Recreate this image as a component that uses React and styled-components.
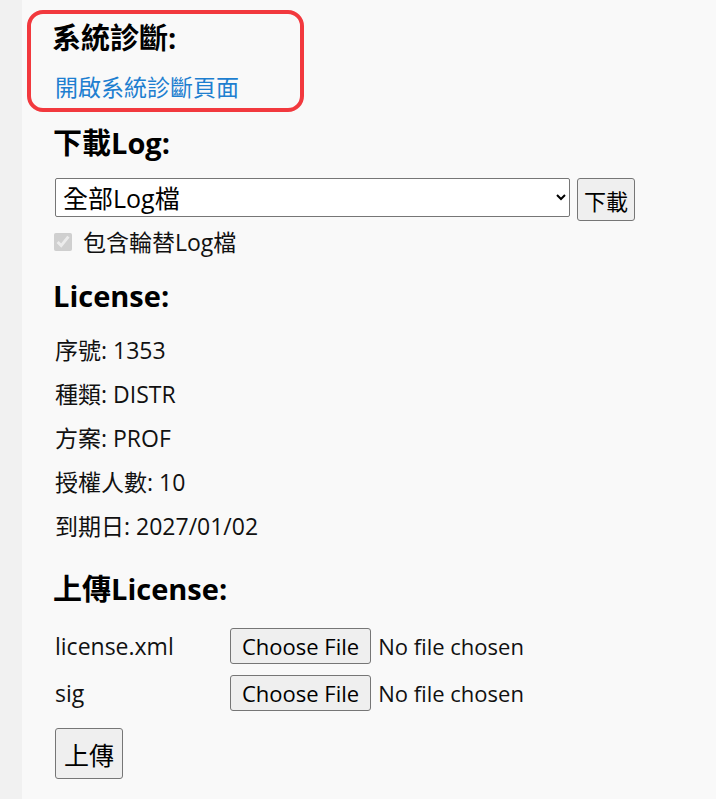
import styled, { createGlobalStyle } from 'styled-components';

const Global = createGlobalStyle`
	html, body {
		margin: 0;
		padding: 0;
		background: #f9f9f9;
	}
	body {
		font-family: "Open Sans", "Noto Sans CJK TC", sans-serif;
		color: #111;
	}
`;

const licenseInfo = [
	['序號', '1353'],
	['種類', 'DISTR'],
	['方案', 'PROF'],
	['授權人數', '10'],
	['到期日', '2027/01/02'],
];

function App() {
	return (
		<>
			<Global />
			<Page>
				<Side />
				<Main>
					<Highlight>
						<Heading>系統診斷:</Heading>
						<Link href="#">開啟系統診斷頁面</Link>
					</Highlight>

					<Section $gap={14}>
						<Heading>下載Log:</Heading>
						<SelectRow>
							<Select defaultValue="all">
								<option value="all">全部Log檔</option>
							</Select>
							<Button>下載</Button>
						</SelectRow>
						<CheckRow>
							<input type="checkbox" checked disabled readOnly />
							包含輪替Log檔
						</CheckRow>
					</Section>

					<Section $gap={23}>
						<Heading>License:</Heading>
						<InfoList>
							{licenseInfo.map(([k, v]) => (
								<Info key={k}>
									{k}: {v}
								</Info>
							))}
						</InfoList>
					</Section>

					<Section $gap={32}>
						<Heading>上傳License:</Heading>
						<UploadGrid>
							<Label>license.xml</Label>
							<FileField>
								<FileButton>Choose File</FileButton>
								No file chosen
							</FileField>
							<Label>sig</Label>
							<FileField>
								<FileButton>Choose File</FileButton>
								No file chosen
							</FileField>
						</UploadGrid>
						<UploadButton>上傳</UploadButton>
					</Section>
				</Main>
			</Page>
		</>
	);
}

const Page = styled.div`
	display: flex;
	min-height: 799px;
`;

const Side = styled.div`
	width: 22px;
	flex-shrink: 0;
	background: #f1f1f1;
`;

const Main = styled.div`
	flex: 1;
	padding: 10px 0 0 5px;
	display: flex;
	flex-direction: column;
	align-items: flex-start;
`;

const Highlight = styled.div`
	width: 277px;
	height: 102px;
	box-sizing: border-box;
	border: 4px solid #f2393e;
	border-radius: 16px;
	padding: 7px 0 0 22px;
	display: flex;
	flex-direction: column;
	align-items: flex-start;
`;

const Heading = styled.div`
	font-size: 29px;
	font-weight: 700;
	line-height: 34px;
	color: #000;
	margin-left: -1px;
`;

const Link = styled.a`
	color: #1e7fd0;
	text-decoration: none;
	font-size: 23px;
	margin-top: 16px;
	margin-left: 2px;
	line-height: 32px;
`;

const Section = styled.div`
	padding-left: 27px;
	margin-top: ${(p) => p.$gap}px;
	display: flex;
	flex-direction: column;
	align-items: flex-start;
`;

const SelectRow = styled.div`
	display: flex;
	align-items: flex-start;
	gap: 7px;
	margin-top: 18px;
	padding-left: 1px;
`;

const Select = styled.select`
	width: 515px;
	height: 39px;
	font-family: inherit;
	font-size: 25px;
	padding: 0 3px;
	border: 1px solid #767676;
	border-radius: 2px;
	background: #fff;
	color: #000;
`;

const Button = styled.button`
	font-family: inherit;
	font-size: 22px;
	height: 43px;
	padding: 0 6px;
	background: #efefef;
	border: 1px solid #767676;
	border-radius: 3px;
	color: #000;
`;

const CheckRow = styled.label`
	display: flex;
	align-items: center;
	gap: 11px;
	font-size: 23px;
	line-height: 28px;
	margin-top: 7px;
	input {
		width: 18px;
		height: 18px;
		margin: 0;
	}
`;

const InfoList = styled.div`
	display: flex;
	flex-direction: column;
	gap: 16px;
	margin-top: 23px;
	padding-left: 1px;
`;

const Info = styled.div`
	font-size: 23px;
	line-height: 28px;
`;

const UploadGrid = styled.div`
	display: grid;
	grid-template-columns: 175px auto;
	row-gap: 11px;
	align-items: center;
	margin-top: 22px;
	padding-left: 1px;
	font-size: 22px;
`;

const Label = styled.div`
	font-size: 23px;
	line-height: 28px;
`;

const FileField = styled.div`
	display: flex;
	align-items: center;
	gap: 7px;
`;

const FileButton = styled.button`
	font-family: inherit;
	font-size: 22px;
	height: 36px;
	padding: 0 11px;
	background: #efefef;
	border: 1px solid #767676;
	border-radius: 3px;
	color: #000;
`;

const UploadButton = styled(Button)`
	height: 51px;
	margin-top: 17px;
	margin-left: 1px;
	padding: 0 8px;
	font-size: 25px;
`;

export default App;
